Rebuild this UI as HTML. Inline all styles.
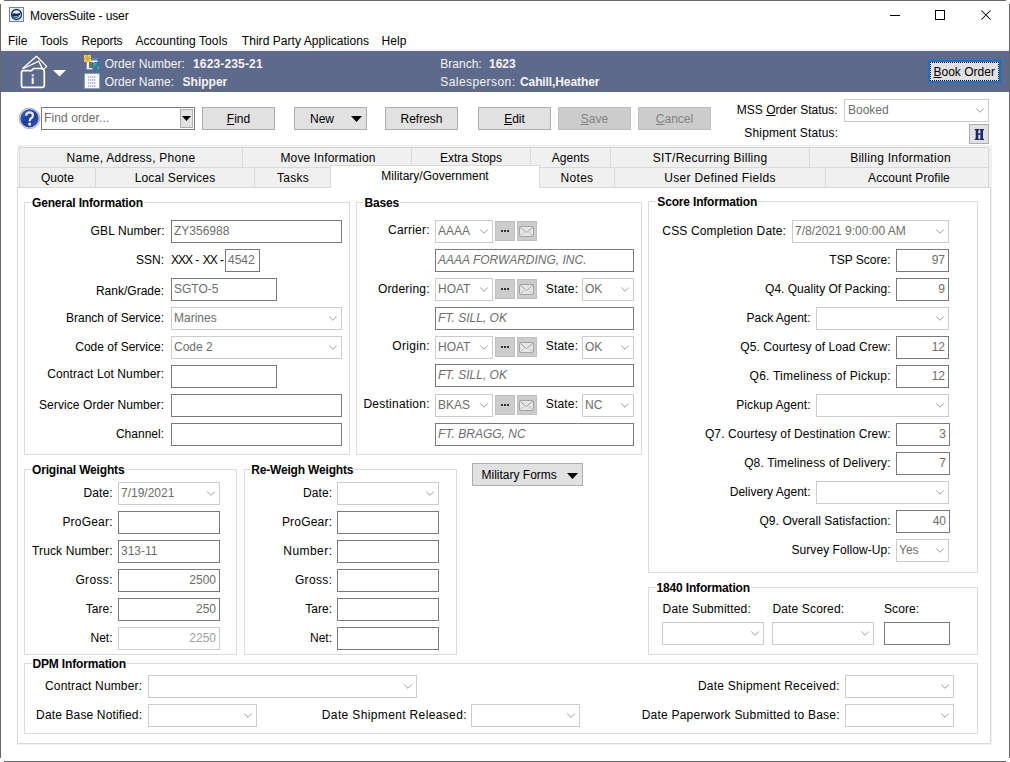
<!DOCTYPE html>
<html><head><meta charset="utf-8"><title>MoversSuite</title>
<style>
*{margin:0;padding:0}
html,body{width:1010px;height:762px;overflow:hidden;background:#fff;font-family:"Liberation Sans", sans-serif;}
.a{position:absolute}
.t{position:absolute;white-space:pre;font-family:"Liberation Sans", sans-serif}
u{text-decoration:underline;text-underline-offset:1px}
</style></head>
<body>
<div class="a" style="left:4px;top:0px;width:1002px;height:1px;background:#686868;"></div>
<div class="a" style="left:0px;top:4px;width:1px;height:754px;background:#686868;"></div>
<div class="a" style="left:1009px;top:4px;width:1px;height:754px;background:#686868;"></div>
<div class="a" style="left:4px;top:761px;width:1002px;height:1px;background:#686868;"></div>
<svg class="a" style="left:9px;top:7px" width="15" height="15" viewBox="0 0 15 15">
<rect x="0.5" y="0.5" width="14" height="14" fill="#e9eef4" stroke="#6a83a8"/>
<circle cx="7.5" cy="7.5" r="5" fill="none" stroke="#0d2f6a" stroke-width="1.3"/>
<path d="M3 7 Q5 6 7 6.5 Q9 7 11.5 5.5 L11 8 Q8 10 5 9 L3 9 Z" fill="#0d2f6a"/>
<path d="M4 9.5 Q7 11.5 10 9.5" fill="none" stroke="#0d2f6a" stroke-width="1"/>
</svg>
<div class="t" style="top:8.84px;font-size:12px;line-height:14px;color:#000;left:30px;letter-spacing:-0.12px;">MoversSuite - user</div>
<div class="a" style="left:890px;top:15px;width:10px;height:1px;background:#000;"></div>
<div class="a" style="left:935px;top:10px;width:10px;height:10px;box-sizing:border-box;border:1px solid #000;"></div>
<svg class="a" style="left:980px;top:9px" width="13" height="13" viewBox="0 0 13 13"><path d="M1.5 1.5 L10.5 10.5 M10.5 1.5 L1.5 10.5" stroke="#000" stroke-width="1.05"/></svg>
<div class="t" style="top:33.84px;font-size:12px;line-height:14px;color:#000;left:8px;letter-spacing:0px;">File</div>
<div class="t" style="top:33.84px;font-size:12px;line-height:14px;color:#000;left:40px;letter-spacing:0px;">Tools</div>
<div class="t" style="top:33.84px;font-size:12px;line-height:14px;color:#000;left:81.5px;letter-spacing:-0.15px;">Reports</div>
<div class="t" style="top:33.84px;font-size:12px;line-height:14px;color:#000;left:135.4px;letter-spacing:0.1px;">Accounting Tools</div>
<div class="t" style="top:33.84px;font-size:12px;line-height:14px;color:#000;left:241.8px;letter-spacing:0.05px;">Third Party Applications</div>
<div class="t" style="top:33.84px;font-size:12px;line-height:14px;color:#000;left:381.4px;letter-spacing:0.1px;">Help</div>
<div class="a" style="left:1px;top:49px;width:1008px;height:2px;background:#f2f2f2;"></div>
<div class="a" style="left:1px;top:51px;width:1008px;height:41px;background:#5e6a8b;"></div>
<svg class="a" style="left:18px;top:54px" width="52" height="36" viewBox="0 0 52 36">
<g fill="none" stroke="#fff" stroke-width="1.3" stroke-linejoin="round">
<path d="M4.3 14.8 L18.5 2.2 L28.7 12.4 L26 15"/>
<path d="M4.5 15 L20.8 7.2 L24.8 15.6"/>
</g>
<path d="M3.5 31.8 L3.5 18.5 Q3.5 16.6 5.5 16.6 L13.5 16.6 L15.5 14.5 L23.7 14.5 Q26.3 15 26.3 18 L26.3 31.8 Q26.3 33.4 24.7 33.4 L5 33.4 Q3.5 33.4 3.5 31.8 Z" fill="none" stroke="#fff" stroke-width="1.7" stroke-linejoin="round"/>
<rect x="13.7" y="23.7" width="2" height="6.2" fill="#fff"/>
<rect x="13.7" y="20.5" width="2" height="1.9" fill="#fff"/>
<path d="M35 16 L48 16 L41.5 22.5 Z" fill="#fff"/>
</svg>
<svg class="a" style="left:83px;top:54px" width="18" height="18" viewBox="0 0 18 18">
<rect x="3.5" y="4.5" width="11" height="11" fill="#eef1f5" stroke="#8a98ad" stroke-width="1"/>
<rect x="3" y="4" width="12" height="2.5" fill="#4a86d8"/>
<rect x="6" y="8" width="4" height="6" fill="#6a6f78"/>
<rect x="1" y="1" width="7" height="7" fill="#f5cf4a"/>
<path d="M4.5 1 V8 M1 4.5 H8 M2 2 L7 7 M7 2 L2 7" stroke="#e39a1e" stroke-width="0.8"/>
<circle cx="13" cy="12.3" r="4.3" fill="#2f6fd0"/>
<path d="M10 10 Q12 8 14 9.5 Q13.5 11 12 12 Q11.5 14 10.2 13.5 Z M14.5 12 Q16.5 11.5 17 13 Q16 15.5 14 16 Q13.5 14 14.5 12Z" fill="#3fb03a"/>
</svg>
<svg class="a" style="left:84px;top:73px" width="16" height="16" viewBox="0 0 16 16">
<rect x="0.5" y="0.5" width="15" height="15" fill="#f7f8fc" stroke="#5f9a8a" stroke-width="1" stroke-dasharray="1 1"/>
<path d="M4 4 H12 M4 7 H12 M4 10 H12 M4 13 H12" stroke="#7a7fd0" stroke-width="1.2" stroke-dasharray="1.3 0.7"/>
<path d="M13 0.5 L15.5 3" stroke="#c8d0d8" stroke-width="1"/>
</svg>
<div class="t" style="top:56.84px;font-size:12px;line-height:14px;color:#f4f4f4;left:104.75px;">Order Number:</div>
<div class="t" style="top:56.84px;font-size:12px;line-height:14px;color:#f4f4f4;font-weight:bold;left:193px;letter-spacing:0.15px;">1623-235-21</div>
<div class="t" style="top:74.84px;font-size:12px;line-height:14px;color:#f4f4f4;left:104.75px;">Order Name:</div>
<div class="t" style="top:74.84px;font-size:12px;line-height:14px;color:#f4f4f4;font-weight:bold;left:182.6px;">Shipper</div>
<div class="t" style="top:56.84px;font-size:12px;line-height:14px;color:#f4f4f4;left:440.3px;">Branch:</div>
<div class="t" style="top:56.84px;font-size:12px;line-height:14px;color:#f4f4f4;font-weight:bold;left:489px;">1623</div>
<div class="t" style="top:74.84px;font-size:12px;line-height:14px;color:#f4f4f4;left:440.3px;letter-spacing:0.42px;">Salesperson:</div>
<div class="t" style="top:74.84px;font-size:12px;line-height:14px;color:#f4f4f4;font-weight:bold;left:520px;letter-spacing:-0.1px;">Cahill,Heather</div>
<div class="a" style="left:928px;top:60px;width:73px;height:23px;box-sizing:border-box;border:1px solid #0078d7;background:#e1e1e1;border-width:2px;"></div>
<div class="a" style="left:930px;top:62px;width:69px;height:1px;background:repeating-linear-gradient(90deg,#000 0 1px,transparent 1px 2px);"></div>
<div class="a" style="left:930px;top:80px;width:69px;height:1px;background:repeating-linear-gradient(90deg,#000 0 1px,transparent 1px 2px);"></div>
<div class="a" style="left:930px;top:62px;width:1px;height:19px;background:repeating-linear-gradient(180deg,#000 0 1px,transparent 1px 2px);"></div>
<div class="a" style="left:998px;top:62px;width:1px;height:19px;background:repeating-linear-gradient(180deg,#000 0 1px,transparent 1px 2px);"></div>
<div class="t" style="top:64.84px;font-size:12px;line-height:14px;color:#000;left:933.5px;"><u>B</u>ook Order</div>
<svg class="a" style="left:18px;top:107px" width="23" height="23" viewBox="0 0 23 23">
<defs><linearGradient id="hg" x1="0" y1="0" x2="1" y2="1"><stop offset="0" stop-color="#3b66d6"/><stop offset="0.5" stop-color="#1a3c9c"/><stop offset="1" stop-color="#3458c0"/></linearGradient></defs>
<circle cx="11.5" cy="11.4" r="10.4" fill="#d4d4d4" stroke="#a8a8a8" stroke-width="0.8"/>
<circle cx="11.5" cy="11.4" r="9.1" fill="url(#hg)"/>
<path d="M8.2 8.8 Q8.2 5.3 11.6 5.3 Q14.9 5.3 14.9 8.4 Q14.9 10.2 13.1 11.3 Q11.7 12.2 11.7 14.2" fill="none" stroke="#ececec" stroke-width="2.2"/>
<rect x="10.4" y="15.8" width="2.6" height="2.6" rx="0.5" fill="#f2f2f2"/>
</svg>
<div class="a" style="left:41px;top:107px;width:154px;height:23px;box-sizing:border-box;border:1px solid #7a7a7a;background:#fff;"></div>
<div class="a" style="left:180px;top:109px;width:13px;height:19px;box-sizing:border-box;border:1px solid #adadad;background:#e1e1e1;"></div>
<svg class="a" style="left:182px;top:116px" width="9" height="5" viewBox="0 0 9 5"><path d="M0 0 L9 0 L4.5 5 Z" fill="#000"/></svg>
<div class="t" style="top:110.84px;font-size:12px;line-height:14px;color:#6d6d6d;left:44px;letter-spacing:0.1px;">Find order...</div>
<div class="a" style="left:202px;top:107px;width:73px;height:23px;box-sizing:border-box;border:1px solid #adadad;background:#e1e1e1;"></div>
<div class="t" style="top:112.34px;font-size:12px;line-height:14px;color:#000;left:38.5px;width:400px;text-align:center;"><u>F</u>ind</div>
<div class="a" style="left:294px;top:107px;width:73px;height:23px;box-sizing:border-box;border:1px solid #adadad;background:#e1e1e1;"></div>
<div class="t" style="top:112.34px;font-size:12px;line-height:14px;color:#000;left:310px;">New</div>
<svg class="a" style="left:351px;top:116px" width="11" height="6" viewBox="0 0 11 6"><path d="M0 0 L11 0 L5.5 6 Z" fill="#000"/></svg>
<div class="a" style="left:385px;top:107px;width:73px;height:23px;box-sizing:border-box;border:1px solid #adadad;background:#e1e1e1;"></div>
<div class="t" style="top:112.34px;font-size:12px;line-height:14px;color:#000;left:221.5px;width:400px;text-align:center;">Refresh</div>
<div class="a" style="left:478px;top:107px;width:73px;height:23px;box-sizing:border-box;border:1px solid #adadad;background:#e1e1e1;"></div>
<div class="t" style="top:112.34px;font-size:12px;line-height:14px;color:#000;left:314.5px;width:400px;text-align:center;"><u>E</u>dit</div>
<div class="a" style="left:558px;top:107px;width:73px;height:23px;box-sizing:border-box;border:1px solid #bfbfbf;background:#cccccc;"></div>
<div class="t" style="top:112.34px;font-size:12px;line-height:14px;color:#838383;left:394.5px;width:400px;text-align:center;"><u>S</u>ave</div>
<div class="a" style="left:638px;top:107px;width:73px;height:23px;box-sizing:border-box;border:1px solid #bfbfbf;background:#cccccc;"></div>
<div class="t" style="top:112.34px;font-size:12px;line-height:14px;color:#838383;left:474.5px;width:400px;text-align:center;"><u>C</u>ancel</div>
<div class="t" style="top:103.34px;font-size:12px;line-height:14px;color:#000;right:172.5px;text-align:right;">MSS <u>O</u>rder Status:</div>
<div class="a" style="left:844px;top:99px;width:145px;height:23px;box-sizing:border-box;border:1px solid #cccccc;background:#fff;"></div>
<div class="t" style="top:103.34px;font-size:12px;line-height:14px;color:#6d6d6d;left:848px;">Booked</div>
<svg class="a" style="left:975px;top:107px" width="10" height="7" viewBox="0 0 10 7"><path d="M1.2 1.5 L5 5.3 L8.8 1.5" fill="none" stroke="#9a9a9a" stroke-width="1"/></svg>
<div class="t" style="top:126.34px;font-size:12px;line-height:14px;color:#000;right:171.85000000000002px;text-align:right;letter-spacing:0.15px;">Shipment Status:</div>
<div class="a" style="left:969px;top:124px;width:20px;height:20px;box-sizing:border-box;border:1px solid #adadad;background:#e1e1e1;"></div>
<svg class="a" style="left:974px;top:129px" width="11" height="11" viewBox="0 0 11 11"><g fill="#17296b"><rect x="1.7" y="0" width="2.6" height="11"/><rect x="6.4" y="0" width="2.6" height="11"/><rect x="0.7" y="0" width="4.4" height="1.3"/><rect x="5.6" y="0" width="4.4" height="1.3"/><rect x="0.7" y="9.7" width="4.4" height="1.3"/><rect x="5.6" y="9.7" width="4.4" height="1.3"/><rect x="4" y="4.4" width="2.6" height="1.5"/></g></svg>
<div class="a" style="left:17px;top:145px;width:975px;height:600px;background:#f0f0f0;"></div>
<div class="a" style="left:19px;top:147px;width:224px;height:21px;box-sizing:border-box;border:1px solid #d9d9d9;background:#f0f0f0;"></div>
<div class="t" style="top:150.84px;font-size:12px;line-height:14px;color:#000;left:-69.0px;width:400px;text-align:center;letter-spacing:0.27px;">Name, Address, Phone</div>
<div class="a" style="left:242px;top:147px;width:170px;height:21px;box-sizing:border-box;border:1px solid #d9d9d9;background:#f0f0f0;"></div>
<div class="t" style="top:150.84px;font-size:12px;line-height:14px;color:#000;left:128.0px;width:400px;text-align:center;letter-spacing:0.15px;">Move Information</div>
<div class="a" style="left:411px;top:147px;width:120px;height:21px;box-sizing:border-box;border:1px solid #d9d9d9;background:#f0f0f0;"></div>
<div class="t" style="top:150.84px;font-size:12px;line-height:14px;color:#000;left:271.0px;width:400px;text-align:center;letter-spacing:0px;">Extra Stops</div>
<div class="a" style="left:530px;top:147px;width:81px;height:21px;box-sizing:border-box;border:1px solid #d9d9d9;background:#f0f0f0;"></div>
<div class="t" style="top:150.84px;font-size:12px;line-height:14px;color:#000;left:370.5px;width:400px;text-align:center;letter-spacing:0.05px;">Agents</div>
<div class="a" style="left:610px;top:147px;width:200px;height:21px;box-sizing:border-box;border:1px solid #d9d9d9;background:#f0f0f0;"></div>
<div class="t" style="top:150.84px;font-size:12px;line-height:14px;color:#000;left:510.0px;width:400px;text-align:center;letter-spacing:0.25px;">SIT/Recurring Billing</div>
<div class="a" style="left:809px;top:147px;width:180px;height:21px;box-sizing:border-box;border:1px solid #d9d9d9;background:#f0f0f0;"></div>
<div class="t" style="top:150.84px;font-size:12px;line-height:14px;color:#000;left:700.5px;width:400px;text-align:center;letter-spacing:0.28px;">Billing Information</div>
<div class="a" style="left:19px;top:167px;width:77px;height:21px;box-sizing:border-box;border:1px solid #d9d9d9;background:#f0f0f0;"></div>
<div class="t" style="top:170.84px;font-size:12px;line-height:14px;color:#000;left:-142.5px;width:400px;text-align:center;letter-spacing:0.1px;">Quote</div>
<div class="a" style="left:95px;top:167px;width:160px;height:21px;box-sizing:border-box;border:1px solid #d9d9d9;background:#f0f0f0;"></div>
<div class="t" style="top:170.84px;font-size:12px;line-height:14px;color:#000;left:-25.0px;width:400px;text-align:center;letter-spacing:0.19px;">Local Services</div>
<div class="a" style="left:254px;top:167px;width:78px;height:21px;box-sizing:border-box;border:1px solid #d9d9d9;background:#f0f0f0;"></div>
<div class="t" style="top:170.84px;font-size:12px;line-height:14px;color:#000;left:93.0px;width:400px;text-align:center;letter-spacing:0.3px;">Tasks</div>
<div class="a" style="left:539px;top:167px;width:76px;height:21px;box-sizing:border-box;border:1px solid #d9d9d9;background:#f0f0f0;"></div>
<div class="t" style="top:170.84px;font-size:12px;line-height:14px;color:#000;left:377.0px;width:400px;text-align:center;letter-spacing:0.3px;">Notes</div>
<div class="a" style="left:614px;top:167px;width:212px;height:21px;box-sizing:border-box;border:1px solid #d9d9d9;background:#f0f0f0;"></div>
<div class="t" style="top:170.84px;font-size:12px;line-height:14px;color:#000;left:520.0px;width:400px;text-align:center;letter-spacing:0.33px;">User Defined Fields</div>
<div class="a" style="left:825px;top:167px;width:164px;height:21px;box-sizing:border-box;border:1px solid #d9d9d9;background:#f0f0f0;"></div>
<div class="t" style="top:170.84px;font-size:12px;line-height:14px;color:#000;left:709.0px;width:400px;text-align:center;letter-spacing:0.07px;">Account Profile</div>
<div class="a" style="left:17px;top:187px;width:974px;height:557px;box-sizing:border-box;border:1px solid #d9d9d9;background:#fff;"></div>
<div class="a" style="left:330px;top:165px;width:210px;height:23px;box-sizing:border-box;border:1px solid #d9d9d9;background:#fff;border-bottom:none;"></div>
<div class="t" style="top:168.84px;font-size:12px;line-height:14px;color:#000;left:235px;width:400px;text-align:center;">Military/Government</div>
<div class="a" style="left:24px;top:202px;width:326px;height:253px;box-sizing:border-box;border:1px solid #dcdcdc;"></div>
<div class="t" style="left:31px;top:196px;font-size:12px;line-height:14px;font-weight:bold;background:#fff;padding:0 1px;color:#000;letter-spacing:-0.17px">General Information</div>
<div class="t" style="top:223.84px;font-size:12px;line-height:14px;color:#000;right:845.4px;text-align:right;letter-spacing:0.1px;">GBL Number:</div>
<div class="a" style="left:171px;top:220px;width:171px;height:23px;box-sizing:border-box;border:1px solid #7a7a7a;background:#fff;"></div>
<div class="t" style="top:223.84px;font-size:12px;line-height:14px;color:#6d6d6d;left:174px;">ZY356988</div>
<div class="t" style="top:252.84px;font-size:12px;line-height:14px;color:#000;right:846px;text-align:right;">SSN:</div>
<div class="t" style="top:252.84px;font-size:12px;line-height:14px;color:#000;left:171px;"><span style="letter-spacing:-1px">XXX</span> - <span style="letter-spacing:-1px">XX</span> -</div>
<div class="a" style="left:225px;top:249px;width:35px;height:23px;box-sizing:border-box;border:1px solid #7a7a7a;background:#fff;"></div>
<div class="t" style="top:252.84px;font-size:12px;line-height:14px;color:#6d6d6d;left:228px;">4542</div>
<div class="t" style="top:283.84px;font-size:12px;line-height:14px;color:#000;right:846px;text-align:right;">Rank/Grade:</div>
<div class="a" style="left:171px;top:278px;width:106px;height:23px;box-sizing:border-box;border:1px solid #7a7a7a;background:#fff;"></div>
<div class="t" style="top:281.84px;font-size:12px;line-height:14px;color:#6d6d6d;left:174px;">SGTO-5</div>
<div class="t" style="top:310.84px;font-size:12px;line-height:14px;color:#000;right:846px;text-align:right;">Branch of Service:</div>
<div class="a" style="left:171px;top:307px;width:171px;height:23px;box-sizing:border-box;border:1px solid #cccccc;background:#fff;"></div>
<div class="t" style="top:310.84px;font-size:12px;line-height:14px;color:#6d6d6d;left:174px;">Marines</div>
<svg class="a" style="left:328px;top:315px" width="10" height="7" viewBox="0 0 10 7"><path d="M1.2 1.5 L5 5.3 L8.8 1.5" fill="none" stroke="#9a9a9a" stroke-width="1"/></svg>
<div class="t" style="top:339.84px;font-size:12px;line-height:14px;color:#000;right:846px;text-align:right;">Code of Service:</div>
<div class="a" style="left:171px;top:336px;width:171px;height:23px;box-sizing:border-box;border:1px solid #cccccc;background:#fff;"></div>
<div class="t" style="top:339.84px;font-size:12px;line-height:14px;color:#6d6d6d;left:174px;">Code 2</div>
<svg class="a" style="left:328px;top:344px" width="10" height="7" viewBox="0 0 10 7"><path d="M1.2 1.5 L5 5.3 L8.8 1.5" fill="none" stroke="#9a9a9a" stroke-width="1"/></svg>
<div class="t" style="top:366.84px;font-size:12px;line-height:14px;color:#000;right:845.89px;text-align:right;letter-spacing:0.11px;">Contract Lot Number:</div>
<div class="a" style="left:171px;top:365px;width:106px;height:23px;box-sizing:border-box;border:1px solid #7a7a7a;background:#fff;"></div>
<div class="t" style="top:398.34px;font-size:12px;line-height:14px;color:#000;right:845.92px;text-align:right;letter-spacing:0.08px;">Service Order Number:</div>
<div class="a" style="left:171px;top:394px;width:171px;height:23px;box-sizing:border-box;border:1px solid #7a7a7a;background:#fff;"></div>
<div class="t" style="top:426.84px;font-size:12px;line-height:14px;color:#000;right:846px;text-align:right;">Channel:</div>
<div class="a" style="left:171px;top:423px;width:171px;height:23px;box-sizing:border-box;border:1px solid #7a7a7a;background:#fff;"></div>
<div class="a" style="left:356px;top:202px;width:286px;height:253px;box-sizing:border-box;border:1px solid #dcdcdc;"></div>
<div class="t" style="left:363.4px;top:196px;font-size:12px;line-height:14px;font-weight:bold;background:#fff;padding:0 1px;color:#000;letter-spacing:-0.17px">Bases</div>
<div class="t" style="top:222.84px;font-size:12px;line-height:14px;color:#000;right:580.3px;text-align:right;letter-spacing:0.2px;">Carrier:</div>
<div class="a" style="left:435px;top:220px;width:58px;height:23px;box-sizing:border-box;border:1px solid #cccccc;background:#fff;"></div>
<div class="t" style="top:223.84px;font-size:12px;line-height:14px;color:#6d6d6d;left:438px;">AAAA</div>
<svg class="a" style="left:479px;top:228px" width="10" height="7" viewBox="0 0 10 7"><path d="M1.2 1.5 L5 5.3 L8.8 1.5" fill="none" stroke="#9a9a9a" stroke-width="1"/></svg>
<div class="a" style="left:495px;top:221px;width:20px;height:20px;box-sizing:border-box;border:1px solid #bfbfbf;background:#cccccc;"></div>
<div class="a" style="left:501px;top:230px;width:8px;height:2px;background:repeating-linear-gradient(90deg,#333 0 2px,transparent 2px 3px)"></div>
<div class="a" style="left:517px;top:221px;width:20px;height:20px;box-sizing:border-box;border:1px solid #bfbfbf;background:#cccccc;"></div>
<svg class="a" style="left:519px;top:226px" width="15" height="12" viewBox="0 0 15 12"><rect x="0.5" y="0.5" width="14" height="10" rx="1.2" fill="#e6e6e6" stroke="#a3a3a3"/><path d="M0.8 1 L7.5 6.5 L14.2 1" fill="none" stroke="#a3a3a3"/><path d="M1 10 L5.5 6 M14 10 L9.5 6" fill="none" stroke="#b8b8b8" stroke-width="0.8"/></svg>
<div class="a" style="left:435px;top:249px;width:199px;height:23px;box-sizing:border-box;border:1px solid #7a7a7a;background:#fff;"></div>
<div class="t" style="top:252.84px;font-size:12px;line-height:14px;color:#6d6d6d;font-style:italic;left:438px;">AAAA FORWARDING, INC.</div>
<div class="t" style="top:281.84px;font-size:12px;line-height:14px;color:#000;right:580.3px;text-align:right;letter-spacing:0.2px;">Ordering:</div>
<div class="a" style="left:435px;top:278px;width:58px;height:23px;box-sizing:border-box;border:1px solid #cccccc;background:#fff;"></div>
<div class="t" style="top:281.84px;font-size:12px;line-height:14px;color:#6d6d6d;left:438px;">HOAT</div>
<svg class="a" style="left:479px;top:286px" width="10" height="7" viewBox="0 0 10 7"><path d="M1.2 1.5 L5 5.3 L8.8 1.5" fill="none" stroke="#9a9a9a" stroke-width="1"/></svg>
<div class="a" style="left:495px;top:279px;width:20px;height:20px;box-sizing:border-box;border:1px solid #bfbfbf;background:#cccccc;"></div>
<div class="a" style="left:501px;top:288px;width:8px;height:2px;background:repeating-linear-gradient(90deg,#333 0 2px,transparent 2px 3px)"></div>
<div class="a" style="left:517px;top:279px;width:20px;height:20px;box-sizing:border-box;border:1px solid #bfbfbf;background:#cccccc;"></div>
<svg class="a" style="left:519px;top:284px" width="15" height="12" viewBox="0 0 15 12"><rect x="0.5" y="0.5" width="14" height="10" rx="1.2" fill="#e6e6e6" stroke="#a3a3a3"/><path d="M0.8 1 L7.5 6.5 L14.2 1" fill="none" stroke="#a3a3a3"/><path d="M1 10 L5.5 6 M14 10 L9.5 6" fill="none" stroke="#b8b8b8" stroke-width="0.8"/></svg>
<div class="t" style="top:281.84px;font-size:12px;line-height:14px;color:#000;left:545.7px;letter-spacing:0.2px;">State:</div>
<div class="a" style="left:582px;top:278px;width:52px;height:23px;box-sizing:border-box;border:1px solid #cccccc;background:#fff;"></div>
<div class="t" style="top:281.84px;font-size:12px;line-height:14px;color:#6d6d6d;left:585px;">OK</div>
<svg class="a" style="left:620px;top:286px" width="10" height="7" viewBox="0 0 10 7"><path d="M1.2 1.5 L5 5.3 L8.8 1.5" fill="none" stroke="#9a9a9a" stroke-width="1"/></svg>
<div class="a" style="left:435px;top:307px;width:199px;height:23px;box-sizing:border-box;border:1px solid #7a7a7a;background:#fff;"></div>
<div class="t" style="top:310.84px;font-size:12px;line-height:14px;color:#6d6d6d;font-style:italic;left:438px;">FT. SILL, OK</div>
<div class="t" style="top:338.84px;font-size:12px;line-height:14px;color:#000;right:580.2px;text-align:right;letter-spacing:0.3px;">Origin:</div>
<div class="a" style="left:435px;top:336px;width:58px;height:23px;box-sizing:border-box;border:1px solid #cccccc;background:#fff;"></div>
<div class="t" style="top:339.84px;font-size:12px;line-height:14px;color:#6d6d6d;left:438px;">HOAT</div>
<svg class="a" style="left:479px;top:344px" width="10" height="7" viewBox="0 0 10 7"><path d="M1.2 1.5 L5 5.3 L8.8 1.5" fill="none" stroke="#9a9a9a" stroke-width="1"/></svg>
<div class="a" style="left:495px;top:337px;width:20px;height:20px;box-sizing:border-box;border:1px solid #bfbfbf;background:#cccccc;"></div>
<div class="a" style="left:501px;top:346px;width:8px;height:2px;background:repeating-linear-gradient(90deg,#333 0 2px,transparent 2px 3px)"></div>
<div class="a" style="left:517px;top:337px;width:20px;height:20px;box-sizing:border-box;border:1px solid #bfbfbf;background:#cccccc;"></div>
<svg class="a" style="left:519px;top:342px" width="15" height="12" viewBox="0 0 15 12"><rect x="0.5" y="0.5" width="14" height="10" rx="1.2" fill="#e6e6e6" stroke="#a3a3a3"/><path d="M0.8 1 L7.5 6.5 L14.2 1" fill="none" stroke="#a3a3a3"/><path d="M1 10 L5.5 6 M14 10 L9.5 6" fill="none" stroke="#b8b8b8" stroke-width="0.8"/></svg>
<div class="t" style="top:338.84px;font-size:12px;line-height:14px;color:#000;left:545.7px;letter-spacing:0.2px;">State:</div>
<div class="a" style="left:582px;top:336px;width:52px;height:23px;box-sizing:border-box;border:1px solid #cccccc;background:#fff;"></div>
<div class="t" style="top:339.84px;font-size:12px;line-height:14px;color:#6d6d6d;left:585px;">OK</div>
<svg class="a" style="left:620px;top:344px" width="10" height="7" viewBox="0 0 10 7"><path d="M1.2 1.5 L5 5.3 L8.8 1.5" fill="none" stroke="#9a9a9a" stroke-width="1"/></svg>
<div class="a" style="left:435px;top:364px;width:199px;height:23px;box-sizing:border-box;border:1px solid #7a7a7a;background:#fff;"></div>
<div class="t" style="top:367.84px;font-size:12px;line-height:14px;color:#6d6d6d;font-style:italic;left:438px;">FT. SILL, OK</div>
<div class="t" style="top:396.84px;font-size:12px;line-height:14px;color:#000;right:580.25px;text-align:right;letter-spacing:0.25px;">Destination:</div>
<div class="a" style="left:435px;top:394px;width:58px;height:23px;box-sizing:border-box;border:1px solid #cccccc;background:#fff;"></div>
<div class="t" style="top:397.84px;font-size:12px;line-height:14px;color:#6d6d6d;left:438px;">BKAS</div>
<svg class="a" style="left:479px;top:402px" width="10" height="7" viewBox="0 0 10 7"><path d="M1.2 1.5 L5 5.3 L8.8 1.5" fill="none" stroke="#9a9a9a" stroke-width="1"/></svg>
<div class="a" style="left:495px;top:395px;width:20px;height:20px;box-sizing:border-box;border:1px solid #bfbfbf;background:#cccccc;"></div>
<div class="a" style="left:501px;top:404px;width:8px;height:2px;background:repeating-linear-gradient(90deg,#333 0 2px,transparent 2px 3px)"></div>
<div class="a" style="left:517px;top:395px;width:20px;height:20px;box-sizing:border-box;border:1px solid #bfbfbf;background:#cccccc;"></div>
<svg class="a" style="left:519px;top:400px" width="15" height="12" viewBox="0 0 15 12"><rect x="0.5" y="0.5" width="14" height="10" rx="1.2" fill="#e6e6e6" stroke="#a3a3a3"/><path d="M0.8 1 L7.5 6.5 L14.2 1" fill="none" stroke="#a3a3a3"/><path d="M1 10 L5.5 6 M14 10 L9.5 6" fill="none" stroke="#b8b8b8" stroke-width="0.8"/></svg>
<div class="t" style="top:396.84px;font-size:12px;line-height:14px;color:#000;left:545.7px;letter-spacing:0.2px;">State:</div>
<div class="a" style="left:582px;top:394px;width:52px;height:23px;box-sizing:border-box;border:1px solid #cccccc;background:#fff;"></div>
<div class="t" style="top:397.84px;font-size:12px;line-height:14px;color:#6d6d6d;left:585px;">NC</div>
<svg class="a" style="left:620px;top:402px" width="10" height="7" viewBox="0 0 10 7"><path d="M1.2 1.5 L5 5.3 L8.8 1.5" fill="none" stroke="#9a9a9a" stroke-width="1"/></svg>
<div class="a" style="left:435px;top:423px;width:199px;height:23px;box-sizing:border-box;border:1px solid #7a7a7a;background:#fff;"></div>
<div class="t" style="top:426.84px;font-size:12px;line-height:14px;color:#6d6d6d;font-style:italic;left:438px;">FT. BRAGG, NC</div>
<div class="a" style="left:648px;top:201px;width:330px;height:372px;box-sizing:border-box;border:1px solid #dcdcdc;"></div>
<div class="t" style="left:656.3px;top:195px;font-size:12px;line-height:14px;font-weight:bold;background:#fff;padding:0 1px;color:#000;letter-spacing:-0.17px">Score Information</div>
<div class="t" style="top:223.84px;font-size:12px;line-height:14px;color:#000;right:223.95000000000005px;text-align:right;letter-spacing:0.15px;">CSS Completion Date:</div>
<div class="a" style="left:792px;top:220px;width:157px;height:23px;box-sizing:border-box;border:1px solid #cccccc;background:#fff;"></div>
<div class="t" style="top:223.84px;font-size:12px;line-height:14px;color:#6d6d6d;left:795px;">7/8/2021 9:00:00 AM</div>
<svg class="a" style="left:935px;top:228px" width="10" height="7" viewBox="0 0 10 7"><path d="M1.2 1.5 L5 5.3 L8.8 1.5" fill="none" stroke="#9a9a9a" stroke-width="1"/></svg>
<div class="t" style="top:252.84px;font-size:12px;line-height:14px;color:#000;right:119.5px;text-align:right;">TSP Score:</div>
<div class="a" style="left:896px;top:249px;width:53px;height:23px;box-sizing:border-box;border:1px solid #7a7a7a;background:#fff;"></div>
<div class="t" style="top:252.84px;font-size:12px;line-height:14px;color:#6d6d6d;right:65px;text-align:right;">97</div>
<div class="t" style="top:281.84px;font-size:12px;line-height:14px;color:#000;right:119.5px;text-align:right;">Q4. Quality Of Packing:</div>
<div class="a" style="left:896px;top:278px;width:53px;height:23px;box-sizing:border-box;border:1px solid #7a7a7a;background:#fff;"></div>
<div class="t" style="top:281.84px;font-size:12px;line-height:14px;color:#6d6d6d;right:65px;text-align:right;">9</div>
<div class="t" style="top:310.84px;font-size:12px;line-height:14px;color:#000;right:199.5px;text-align:right;">Pack Agent:</div>
<div class="a" style="left:816px;top:307px;width:133px;height:23px;box-sizing:border-box;border:1px solid #cccccc;background:#fff;"></div>
<svg class="a" style="left:935px;top:315px" width="10" height="7" viewBox="0 0 10 7"><path d="M1.2 1.5 L5 5.3 L8.8 1.5" fill="none" stroke="#9a9a9a" stroke-width="1"/></svg>
<div class="t" style="top:339.84px;font-size:12px;line-height:14px;color:#000;right:119.44000000000005px;text-align:right;letter-spacing:0.06px;">Q5. Courtesy of Load Crew:</div>
<div class="a" style="left:896px;top:336px;width:53px;height:23px;box-sizing:border-box;border:1px solid #7a7a7a;background:#fff;"></div>
<div class="t" style="top:339.84px;font-size:12px;line-height:14px;color:#6d6d6d;right:65px;text-align:right;">12</div>
<div class="t" style="top:368.84px;font-size:12px;line-height:14px;color:#000;right:119.26999999999998px;text-align:right;letter-spacing:0.23px;">Q6. Timeliness of Pickup:</div>
<div class="a" style="left:896px;top:365px;width:53px;height:23px;box-sizing:border-box;border:1px solid #7a7a7a;background:#fff;"></div>
<div class="t" style="top:368.84px;font-size:12px;line-height:14px;color:#6d6d6d;right:65px;text-align:right;">12</div>
<div class="t" style="top:397.84px;font-size:12px;line-height:14px;color:#000;right:199.42999999999995px;text-align:right;letter-spacing:0.07px;">Pickup Agent:</div>
<div class="a" style="left:816px;top:394px;width:133px;height:23px;box-sizing:border-box;border:1px solid #cccccc;background:#fff;"></div>
<svg class="a" style="left:935px;top:402px" width="10" height="7" viewBox="0 0 10 7"><path d="M1.2 1.5 L5 5.3 L8.8 1.5" fill="none" stroke="#9a9a9a" stroke-width="1"/></svg>
<div class="t" style="top:426.84px;font-size:12px;line-height:14px;color:#000;right:119.38999999999999px;text-align:right;letter-spacing:0.11px;">Q7. Courtesy of Destination Crew:</div>
<div class="a" style="left:896px;top:423px;width:54px;height:23px;box-sizing:border-box;border:1px solid #7a7a7a;background:#fff;"></div>
<div class="t" style="top:426.84px;font-size:12px;line-height:14px;color:#6d6d6d;right:64px;text-align:right;">3</div>
<div class="t" style="top:455.84px;font-size:12px;line-height:14px;color:#000;right:119.36000000000001px;text-align:right;letter-spacing:0.14px;">Q8. Timeliness of Delivery:</div>
<div class="a" style="left:896px;top:452px;width:54px;height:23px;box-sizing:border-box;border:1px solid #7a7a7a;background:#fff;"></div>
<div class="t" style="top:455.84px;font-size:12px;line-height:14px;color:#6d6d6d;right:64px;text-align:right;">7</div>
<div class="t" style="top:484.84px;font-size:12px;line-height:14px;color:#000;right:199.5px;text-align:right;">Delivery Agent:</div>
<div class="a" style="left:816px;top:481px;width:133px;height:23px;box-sizing:border-box;border:1px solid #cccccc;background:#fff;"></div>
<svg class="a" style="left:935px;top:489px" width="10" height="7" viewBox="0 0 10 7"><path d="M1.2 1.5 L5 5.3 L8.8 1.5" fill="none" stroke="#9a9a9a" stroke-width="1"/></svg>
<div class="t" style="top:513.84px;font-size:12px;line-height:14px;color:#000;right:119.42999999999995px;text-align:right;letter-spacing:0.07px;">Q9. Overall Satisfaction:</div>
<div class="a" style="left:896px;top:510px;width:54px;height:23px;box-sizing:border-box;border:1px solid #7a7a7a;background:#fff;"></div>
<div class="t" style="top:513.84px;font-size:12px;line-height:14px;color:#6d6d6d;right:64px;text-align:right;">40</div>
<div class="t" style="top:542.84px;font-size:12px;line-height:14px;color:#000;right:119.44000000000005px;text-align:right;letter-spacing:0.06px;">Survey Follow-Up:</div>
<div class="a" style="left:896px;top:539px;width:53px;height:23px;box-sizing:border-box;border:1px solid #cccccc;background:#fff;"></div>
<div class="t" style="top:542.84px;font-size:12px;line-height:14px;color:#6d6d6d;left:899px;">Yes</div>
<svg class="a" style="left:935px;top:547px" width="10" height="7" viewBox="0 0 10 7"><path d="M1.2 1.5 L5 5.3 L8.8 1.5" fill="none" stroke="#9a9a9a" stroke-width="1"/></svg>
<div class="a" style="left:648px;top:587px;width:330px;height:68px;box-sizing:border-box;border:1px solid #dcdcdc;"></div>
<div class="t" style="left:655.6px;top:581px;font-size:12px;line-height:14px;font-weight:bold;background:#fff;padding:0 1px;color:#000;letter-spacing:-0.17px">1840 Information</div>
<div class="t" style="top:601.84px;font-size:12px;line-height:14px;color:#000;left:662.6px;letter-spacing:0.15px;">Date Submitted:</div>
<div class="a" style="left:662px;top:622px;width:102px;height:23px;box-sizing:border-box;border:1px solid #cccccc;background:#fff;"></div>
<svg class="a" style="left:750px;top:630px" width="10" height="7" viewBox="0 0 10 7"><path d="M1.2 1.5 L5 5.3 L8.8 1.5" fill="none" stroke="#9a9a9a" stroke-width="1"/></svg>
<div class="t" style="top:601.84px;font-size:12px;line-height:14px;color:#000;left:772.4px;letter-spacing:0.15px;">Date Scored:</div>
<div class="a" style="left:772px;top:622px;width:102px;height:23px;box-sizing:border-box;border:1px solid #cccccc;background:#fff;"></div>
<svg class="a" style="left:860px;top:630px" width="10" height="7" viewBox="0 0 10 7"><path d="M1.2 1.5 L5 5.3 L8.8 1.5" fill="none" stroke="#9a9a9a" stroke-width="1"/></svg>
<div class="t" style="top:601.84px;font-size:12px;line-height:14px;color:#000;left:884px;letter-spacing:0.1px;">Score:</div>
<div class="a" style="left:884px;top:622px;width:66px;height:23px;box-sizing:border-box;border:1px solid #7a7a7a;background:#fff;"></div>
<div class="a" style="left:24px;top:469px;width:213px;height:186px;box-sizing:border-box;border:1px solid #dcdcdc;"></div>
<div class="t" style="left:31px;top:463px;font-size:12px;line-height:14px;font-weight:bold;background:#fff;padding:0 1px;color:#000;letter-spacing:-0.17px">Original Weights</div>
<div class="t" style="top:485.84px;font-size:12px;line-height:14px;color:#000;right:897.4px;text-align:right;letter-spacing:0.1px;">Date:</div>
<div class="a" style="left:118px;top:482px;width:102px;height:23px;box-sizing:border-box;border:1px solid #cccccc;background:#fff;"></div>
<div class="t" style="top:485.84px;font-size:12px;line-height:14px;color:#6d6d6d;left:121px;">7/19/2021</div>
<svg class="a" style="left:206px;top:490px" width="10" height="7" viewBox="0 0 10 7"><path d="M1.2 1.5 L5 5.3 L8.8 1.5" fill="none" stroke="#9a9a9a" stroke-width="1"/></svg>
<div class="t" style="top:514.84px;font-size:12px;line-height:14px;color:#000;right:897.3px;text-align:right;letter-spacing:0.2px;">ProGear:</div>
<div class="a" style="left:118px;top:511px;width:102px;height:23px;box-sizing:border-box;border:1px solid #7a7a7a;background:#fff;"></div>
<div class="t" style="top:543.84px;font-size:12px;line-height:14px;color:#000;right:897.37px;text-align:right;letter-spacing:0.13px;">Truck Number:</div>
<div class="a" style="left:118px;top:540px;width:102px;height:23px;box-sizing:border-box;border:1px solid #7a7a7a;background:#fff;"></div>
<div class="t" style="top:543.84px;font-size:12px;line-height:14px;color:#6d6d6d;left:121px;">313-11</div>
<div class="t" style="top:572.84px;font-size:12px;line-height:14px;color:#000;right:897.15px;text-align:right;letter-spacing:0.35px;">Gross:</div>
<div class="a" style="left:118px;top:569px;width:102px;height:23px;box-sizing:border-box;border:1px solid #7a7a7a;background:#fff;"></div>
<div class="t" style="top:572.84px;font-size:12px;line-height:14px;color:#6d6d6d;right:794px;text-align:right;">2500</div>
<div class="t" style="top:601.84px;font-size:12px;line-height:14px;color:#000;right:897.5px;text-align:right;">Tare:</div>
<div class="a" style="left:118px;top:598px;width:102px;height:23px;box-sizing:border-box;border:1px solid #7a7a7a;background:#fff;"></div>
<div class="t" style="top:601.84px;font-size:12px;line-height:14px;color:#6d6d6d;right:794px;text-align:right;">250</div>
<div class="t" style="top:630.84px;font-size:12px;line-height:14px;color:#000;right:897.5px;text-align:right;">Net:</div>
<div class="a" style="left:118px;top:627px;width:102px;height:23px;box-sizing:border-box;border:1px solid #cccccc;background:#fff;"></div>
<div class="t" style="top:630.84px;font-size:12px;line-height:14px;color:#a0a0a0;right:794px;text-align:right;">2250</div>
<div class="a" style="left:244px;top:469px;width:213px;height:186px;box-sizing:border-box;border:1px solid #dcdcdc;"></div>
<div class="t" style="left:250.2px;top:463px;font-size:12px;line-height:14px;font-weight:bold;background:#fff;padding:0 1px;color:#000;letter-spacing:-0.17px">Re-Weigh Weights</div>
<div class="t" style="top:485.84px;font-size:12px;line-height:14px;color:#000;right:677.9px;text-align:right;letter-spacing:0.1px;">Date:</div>
<div class="a" style="left:337px;top:482px;width:102px;height:23px;box-sizing:border-box;border:1px solid #cccccc;background:#fff;"></div>
<svg class="a" style="left:425px;top:490px" width="10" height="7" viewBox="0 0 10 7"><path d="M1.2 1.5 L5 5.3 L8.8 1.5" fill="none" stroke="#9a9a9a" stroke-width="1"/></svg>
<div class="t" style="top:514.84px;font-size:12px;line-height:14px;color:#000;right:677.8px;text-align:right;letter-spacing:0.2px;">ProGear:</div>
<div class="a" style="left:337px;top:511px;width:102px;height:23px;box-sizing:border-box;border:1px solid #7a7a7a;background:#fff;"></div>
<div class="t" style="top:543.84px;font-size:12px;line-height:14px;color:#000;right:677.55px;text-align:right;letter-spacing:0.45px;">Number:</div>
<div class="a" style="left:337px;top:540px;width:102px;height:23px;box-sizing:border-box;border:1px solid #7a7a7a;background:#fff;"></div>
<div class="t" style="top:572.84px;font-size:12px;line-height:14px;color:#000;right:677.65px;text-align:right;letter-spacing:0.35px;">Gross:</div>
<div class="a" style="left:337px;top:569px;width:102px;height:23px;box-sizing:border-box;border:1px solid #7a7a7a;background:#fff;"></div>
<div class="t" style="top:601.84px;font-size:12px;line-height:14px;color:#000;right:678px;text-align:right;">Tare:</div>
<div class="a" style="left:337px;top:598px;width:102px;height:23px;box-sizing:border-box;border:1px solid #7a7a7a;background:#fff;"></div>
<div class="t" style="top:630.84px;font-size:12px;line-height:14px;color:#000;right:678px;text-align:right;">Net:</div>
<div class="a" style="left:337px;top:627px;width:102px;height:23px;box-sizing:border-box;border:1px solid #7a7a7a;background:#fff;"></div>
<div class="a" style="left:472px;top:463px;width:111px;height:23px;box-sizing:border-box;border:1px solid #adadad;background:#e1e1e1;"></div>
<div class="t" style="top:467.84px;font-size:12px;line-height:14px;color:#000;left:481.5px;">Military Forms</div>
<svg class="a" style="left:567px;top:473px" width="11" height="6" viewBox="0 0 11 6"><path d="M0 0 L11 0 L5.5 6 Z" fill="#000"/></svg>
<div class="a" style="left:24px;top:663px;width:954px;height:71px;box-sizing:border-box;border:1px solid #dcdcdc;"></div>
<div class="t" style="left:31.5px;top:657px;font-size:12px;line-height:14px;font-weight:bold;background:#fff;padding:0 1px;color:#000;letter-spacing:-0.17px">DPM Information</div>
<div class="t" style="top:678.84px;font-size:12px;line-height:14px;color:#000;right:867.85px;text-align:right;letter-spacing:0.15px;">Contract Number:</div>
<div class="a" style="left:148px;top:675px;width:269px;height:23px;box-sizing:border-box;border:1px solid #cccccc;background:#fff;"></div>
<svg class="a" style="left:403px;top:683px" width="10" height="7" viewBox="0 0 10 7"><path d="M1.2 1.5 L5 5.3 L8.8 1.5" fill="none" stroke="#9a9a9a" stroke-width="1"/></svg>
<div class="t" style="top:707.84px;font-size:12px;line-height:14px;color:#000;right:867.86px;text-align:right;letter-spacing:0.14px;">Date Base Notified:</div>
<div class="a" style="left:148px;top:704px;width:109px;height:23px;box-sizing:border-box;border:1px solid #cccccc;background:#fff;"></div>
<svg class="a" style="left:243px;top:712px" width="10" height="7" viewBox="0 0 10 7"><path d="M1.2 1.5 L5 5.3 L8.8 1.5" fill="none" stroke="#9a9a9a" stroke-width="1"/></svg>
<div class="t" style="top:707.84px;font-size:12px;line-height:14px;color:#000;right:543.14px;text-align:right;letter-spacing:0.36px;">Date Shipment Released:</div>
<div class="a" style="left:471px;top:704px;width:109px;height:23px;box-sizing:border-box;border:1px solid #cccccc;background:#fff;"></div>
<svg class="a" style="left:566px;top:712px" width="10" height="7" viewBox="0 0 10 7"><path d="M1.2 1.5 L5 5.3 L8.8 1.5" fill="none" stroke="#9a9a9a" stroke-width="1"/></svg>
<div class="t" style="top:678.84px;font-size:12px;line-height:14px;color:#000;right:170.25px;text-align:right;letter-spacing:0.25px;">Date Shipment Received:</div>
<div class="a" style="left:845px;top:675px;width:109px;height:23px;box-sizing:border-box;border:1px solid #cccccc;background:#fff;"></div>
<svg class="a" style="left:940px;top:683px" width="10" height="7" viewBox="0 0 10 7"><path d="M1.2 1.5 L5 5.3 L8.8 1.5" fill="none" stroke="#9a9a9a" stroke-width="1"/></svg>
<div class="t" style="top:707.84px;font-size:12px;line-height:14px;color:#000;right:170.27999999999997px;text-align:right;letter-spacing:0.22px;">Date Paperwork Submitted to Base:</div>
<div class="a" style="left:845px;top:704px;width:109px;height:23px;box-sizing:border-box;border:1px solid #cccccc;background:#fff;"></div>
<svg class="a" style="left:940px;top:712px" width="10" height="7" viewBox="0 0 10 7"><path d="M1.2 1.5 L5 5.3 L8.8 1.5" fill="none" stroke="#9a9a9a" stroke-width="1"/></svg>
</body></html>
